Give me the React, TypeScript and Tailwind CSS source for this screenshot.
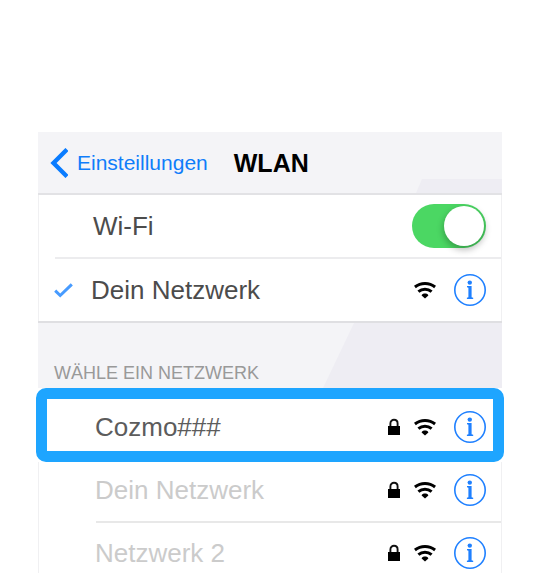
import React, { useState } from "react";

function WifiIcon() {
  return (
    <svg className="h-[18px] w-[22px] shrink-0" viewBox="0 0 22 18" fill="none" stroke="#000" role="img" aria-label="Signal">
      <path d="M0.9 6C6.8 1.3 15.2 1.3 21.1 6" strokeWidth="3" />
      <path d="M4.4 10.6C8.3 7.3 13.7 7.3 17.6 10.6" strokeWidth="3" />
      <path d="M7.6 14.4C8.4 11.8 13.6 11.8 14.4 14.4L11 17.6Z" fill="#000" stroke="none" />
    </svg>
  );
}

function LockIcon() {
  return (
    <svg className="h-[18px] w-3 shrink-0" viewBox="0 0 12 18" fill="none" role="img" aria-label="Gesichert">
      <path d="M2.4 9V5.4C2.4 0.6 9.6 0.6 9.6 5.4V9" stroke="#111" strokeWidth="1.9" />
      <path d="M0 8H12V17H0Z" fill="#000" />
    </svg>
  );
}

function InfoButton({ name }: { name: string }) {
  return (
    <button type="button" aria-label={`Info zu ${name}`} className="ml-[18px] size-8 shrink-0">
      <svg className="size-8" viewBox="0 0 32 32" fill="none">
        <circle cx="16" cy="16" r="15.2" stroke="#1f80ff" strokeWidth="1.6" />
        <circle cx="15.8" cy="8.6" r="2.2" fill="#1f80ff" />
        <path d="M13 12H17.6V23.2L19.2 23.8V25H12.9V23.8L14.4 23.2V13.8L13 13.3Z" fill="#1f80ff" />
      </svg>
    </button>
  );
}

function NetworkIcons({ name, locked = false }: { name: string; locked?: boolean }) {
  return (
    <div className="ml-auto flex items-center">
      {locked && <LockIcon />}
      <span className="ml-[14px] flex">
        <WifiIcon />
      </span>
      <InfoButton name={name} />
    </div>
  );
}

export default function App() {
  const [enabled, setEnabled] = useState(true);

  return (
    <div className="bg-white pt-[132px] pr-10 pl-[38px] font-['Liberation_Sans',Arial,sans-serif] text-[26px] leading-8 text-[#4c4c4c]">
      <main>
        <header className="relative flex h-[63px] items-center border-b-2 border-[#e2e2e5] bg-[#f4f4f7] pl-3">
          <div className="absolute right-0 bottom-0 h-[14px] w-[86px] bg-[#eeedf3] [clip-path:polygon(6px_0,100%_0,100%_100%,0_100%)]" />
          <a href="#einstellungen" className="flex items-center text-[21px] text-[#0f7dfa]">
            <svg className="mr-[9px] h-[30px] w-[18px]" viewBox="0 0 18 30" fill="none" aria-hidden="true">
              <path d="M17 1.5L3.5 15L17 28.5" stroke="#0a7cff" strokeWidth="4.4" />
            </svg>
            Einsteillungen
          </a>
          <h1 className="ml-[26px] text-[25px] font-bold text-black">WLAN</h1>
        </header>

        <section className="border-x border-[#f0f0f2]">
          <div className="flex h-[62px] items-center pr-[15px] pl-[54px]">
            <label htmlFor="wifi">Wi-Fi</label>
            <input
              id="wifi"
              type="checkbox"
              role="switch"
              checked={enabled}
              onChange={(event) => setEnabled(event.target.checked)}
              className="relative ml-auto flex h-11 w-[74px] appearance-none items-center rounded-full bg-[#ddd] px-0.5 before:size-10 before:rounded-full before:bg-white before:shadow-[0_3px_6px_1px_rgba(0,0,0,0.25)] checked:justify-end checked:bg-[#4bd763]"
            />
          </div>
          <div className="ml-4 h-0.5 bg-[#ececee]" />
          <div className="flex h-[62px] items-center pr-[15px] pl-[15px]">
            <svg className="mr-[18px] h-[15px] w-[19px]" viewBox="0 0 19 15" fill="none" role="img" aria-label="Verbunden">
              <path d="M1.2 7.7L6.2 12.5L17.8 1.3" stroke="#479bff" strokeWidth="3" />
            </svg>
            <span>Dein Netzwerk</span>
            <NetworkIcons name="Dein Netzwerk" />
          </div>
        </section>

        <div className="relative h-[67px] border-t-2 border-[#dfdfe2] bg-[#f4f4f7] pt-[34px] pl-4">
          <div className="absolute right-0 bottom-0 h-full w-[179px] bg-[#eeedf3] [clip-path:polygon(31px_0,100%_0,100%_100%,0_100%)]" />
          <h2 className="relative text-[18px] text-[#999]">WÄHLE EIN NETZWERK</h2>
        </div>

        <div className="relative -mx-0.5 flex rounded-[10px] border-[11px] border-[#1ea5ff] bg-white pt-3 pr-[7px] pb-2 pl-12 text-[#5c5c5c]">
          <span>Cozmo###</span>
          <NetworkIcons name="Cozmo###" locked />
        </div>

        <section className="border-x border-[#f0f0f2] text-[#cbcbcb]">
          <div className="flex pt-3 pr-[15px] pb-[15px] pl-14">
            <span>Dein Netzwerk</span>
            <NetworkIcons name="Dein Netzwerk" locked />
          </div>
          <div className="ml-[57px] h-0.5 bg-[#e8e8e8]" />
          <div className="flex pt-[14px] pr-[15px] pb-[4px] pl-14">
            <span>Netzwerk 2</span>
            <NetworkIcons name="Netzwerk 2" locked />
          </div>
        </section>
      </main>
    </div>
  );
}
